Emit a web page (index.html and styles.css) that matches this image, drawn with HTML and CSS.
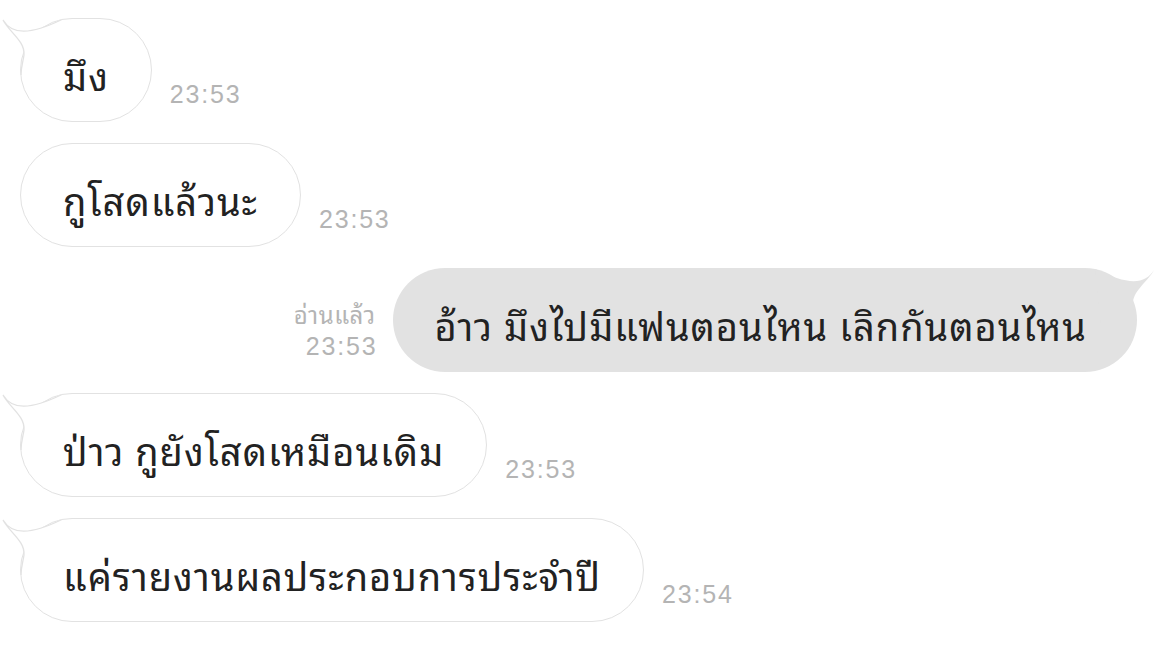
FILE: index.html
```html
<!DOCTYPE html>
<html lang="th">

<head>
    <meta charset="UTF-8">
    <meta name="viewport" content="width=device-width, initial-scale=1.0">
    <title>Chat</title>
    <link rel="stylesheet" href="styles.css">
</head>

<body>
    <div class="chat">
        <div class="row in">
            <div class="bubble">
                <svg class="tail" viewBox="0 0 64 62" width="64" height="62">
                    <path class="tail-fill" d="M3 3 C12 18 30 18 62 2 L56 60 L22 60 C21 50 23 45 24 38 C25 24 10 16 3 3 Z" />
                    <path class="tail-line" d="M62 2.5 C30 18 12 18 3 3 C10 16 25 24 24 38 C23 45 21 50 21 58" />
                </svg>
                <span class="text">มึง</span>
            </div>
            <span class="time">23:53</span>
        </div>

        <div class="row in">
            <div class="bubble">
                <span class="text">กูโสดแล้วนะ</span>
            </div>
            <span class="time">23:53</span>
        </div>

        <div class="row out">
            <div class="meta">
                <span class="read">อ่านแล้ว</span>
                <span class="time">23:53</span>
            </div>
            <div class="bubble">
                <svg class="tail" viewBox="0 0 64 62" width="64" height="62">
                    <path class="tail-fill" d="M3 3 C12 18 30 18 62 2 L56 60 L22 60 C21 50 23 45 24 38 C25 24 10 16 3 3 Z" />
                </svg>
                <span class="text">อ้าว มึงไปมีแฟนตอนไหน เลิกกันตอนไหน</span>
            </div>
        </div>

        <div class="row in">
            <div class="bubble">
                <svg class="tail" viewBox="0 0 64 62" width="64" height="62">
                    <path class="tail-fill" d="M3 3 C12 18 30 18 62 2 L56 60 L22 60 C21 50 23 45 24 38 C25 24 10 16 3 3 Z" />
                    <path class="tail-line" d="M62 2.5 C30 18 12 18 3 3 C10 16 25 24 24 38 C23 45 21 50 21 58" />
                </svg>
                <span class="text">ป่าว กูยังโสดเหมือนเดิม</span>
            </div>
            <span class="time">23:53</span>
        </div>

        <div class="row in">
            <div class="bubble">
                <svg class="tail" viewBox="0 0 64 62" width="64" height="62">
                    <path class="tail-fill" d="M3 3 C12 18 30 18 62 2 L56 60 L22 60 C21 50 23 45 24 38 C25 24 10 16 3 3 Z" />
                    <path class="tail-line" d="M62 2.5 C30 18 12 18 3 3 C10 16 25 24 24 38 C23 45 21 50 21 58" />
                </svg>
                <span class="text">แค่รายงานผลประกอบการประจำปี</span>
            </div>
            <span class="time">23:54</span>
        </div>
    </div>
</body>

</html>
```

FILE: styles.css
```css
* {
    margin: 0;
    padding: 0;
    box-sizing: border-box;
}

body {
    background: #fff;
    font-family: "Noto Sans Thai Looped", "Noto Sans Thai", "Noto Sans", "DejaVu Sans", sans-serif;
    color: #222;
}

.chat {
    display: flex;
    flex-direction: column;
    gap: 21px;
    padding: 18px 32px 0 20px;
}

.row {
    display: flex;
    align-items: flex-end;
}

.row.out {
    justify-content: flex-end;
}

.bubble {
    position: relative;
    height: 104px;
    display: flex;
    align-items: center;
    padding: 0 42px;
    border-radius: 52px;
    background: #fff;
    border: 1px solid #e2e2e2;
}

.text {
    font-size: 38px;
    line-height: 1;
    letter-spacing: 1px;
    white-space: nowrap;
    padding-top: 8px;
}

.tail {
    position: absolute;
    left: -21px;
    top: -2px;
    overflow: visible;
}

.tail-fill {
    fill: #fff;
}

.tail-line {
    fill: none;
    stroke: #e2e2e2;
    stroke-width: 1.3;
}

.out .bubble {
    background: #e2e2e2;
    border: 0;
    padding-right: 50px;
}

.out .tail {
    left: auto;
    right: -20px;
    top: -1px;
    transform: scaleX(-1);
}

.out .tail-fill {
    fill: #e2e2e2;
}

.time {
    font-family: "Liberation Sans", Arial, sans-serif;
    font-size: 25px;
    line-height: 1;
    letter-spacing: 1.8px;
    color: #b4b4b4;
    margin: 0 0 15px 18px;
}

.meta {
    display: flex;
    flex-direction: column;
    align-items: flex-end;
    margin: 0 17px 13px 0;
}

.meta .time {
    margin: 9px -1.8px 0 0;
}

.read {
    font-size: 24px;
    line-height: 1;
    letter-spacing: 0.5px;
    color: #b4b4b4;
}
```
